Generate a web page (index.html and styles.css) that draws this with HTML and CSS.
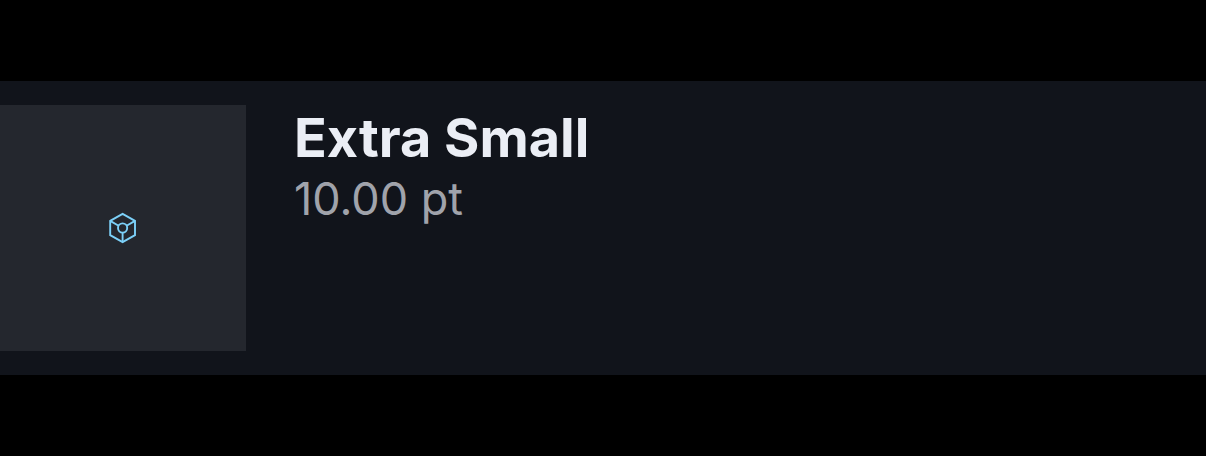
FILE: index.html
```
<!DOCTYPE html>
<html lang="en">
<head>
<meta charset="utf-8">
<meta name="viewport" content="width=device-width, initial-scale=1">
<title>Extra Small</title>
<link rel="stylesheet" href="styles.css">
</head>
<body>
<main class="list">
  <article class="item">
    <div class="thumb">
      <svg class="cube" viewBox="0 0 30 32" fill="none" stroke="currentColor" stroke-width="1.9" stroke-linejoin="miter" aria-hidden="true">
        <path d="M14.600 1.900 27 8.900v14.200L14.600 30.100 2.200 23.100V8.900z"/>
        <circle cx="14.600" cy="16" r="4.600"/>
        <path d="M2.200 8.900 10.600 13.700M27 8.900 18.600 13.700M14.600 20.600V30"/>
      </svg>
    </div>
    <div class="details">
      <h1 class="title">Extra Small</h1>
      <p class="size">10.00 pt</p>
    </div>
  </article>
</main>
</body>
</html>
```
FILE: styles.css
```
body {
  margin: 0;
  background: #000;
  font-family: Inter, "Liberation Sans", sans-serif;
}

.list {
  min-height: 100vh;
  display: grid;
  align-content: center;
}

.item {
  display: flex;
  gap: 48px;
  padding: 24px 24px 24px 0;
  background: #11141b;
}

.thumb {
  flex: 0 0 246px;
  aspect-ratio: 1;
  display: grid;
  place-items: center;
  background: #24272e;
  color: #7cd0f8;
}

.cube {
  width: 30px;
  height: 32px;
}

.details {
  flex: 1;
  padding-top: 2px;
}

.title,
.size {
  margin: 0;
  line-height: 61px;
}

.title {
  color: #ebeef5;
  font-size: 54px;
  font-weight: 700;
}

.size {
  color: #a0a3ab;
  font-size: 45px;
  font-weight: 400;
}
```
